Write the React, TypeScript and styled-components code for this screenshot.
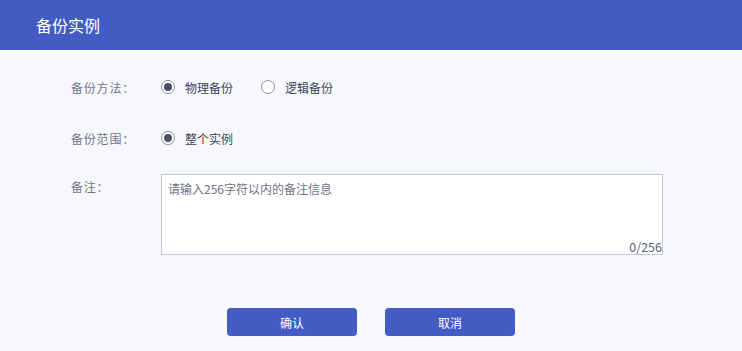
import { useState } from "react";
import styled, { createGlobalStyle } from "styled-components";

const GlobalStyle = createGlobalStyle`
  html, body {
    margin: 0;
    padding: 0;
    background: #f7f8fc;
    font-family: "Noto Sans CJK SC", "Noto Sans", sans-serif;
  }
`;

const Page = styled.div`
  width: 742px;
  height: 351px;
  background: #f7f8fc;
  overflow: hidden;
`;

const Header = styled.div`
  height: 50px;
  background: #435cc4;
  display: flex;
  align-items: center;
  padding-left: 36px;
  color: #ffffff;
  font-size: 16px;
`;

const Form = styled.div`
  display: flex;
  flex-direction: column;
  gap: 21px;
  padding: 22px 0 0 71px;
`;

const Row = styled.div<{ $top?: boolean }>`
  display: flex;
  align-items: ${(p) => (p.$top ? "flex-start" : "center")};
  min-height: 30px;
`;

const Label = styled.div<{ $top?: boolean }>`
  width: 90px;
  flex-shrink: 0;
  font-size: 12px;
  letter-spacing: 0.8px;
  color: #717788;
  padding-top: ${(p) => (p.$top ? "4px" : "0")};
`;

const RadioGroup = styled.div`
  display: flex;
  align-items: center;
  gap: 28px;
`;

const RadioItem = styled.label`
  display: flex;
  align-items: center;
  gap: 10px;
  font-size: 12px;
  color: #3e4456;
  cursor: pointer;
`;

const RadioCircle = styled.span<{ $checked: boolean }>`
  width: 12px;
  height: 12px;
  border-radius: 50%;
  border: 1px solid #8e93a3;
  background: #fff;
  display: flex;
  align-items: center;
  justify-content: center;
  &::after {
    content: "";
    width: 8px;
    height: 8px;
    border-radius: 50%;
    background: #4a5068;
    display: ${(p) => (p.$checked ? "block" : "none")};
  }
`;

const TextBox = styled.div`
  position: relative;
  width: 500px;
  height: 79px;
  border: 1px solid #c2c8db;
  background: #ffffff;
`;

const Area = styled.textarea`
  box-sizing: border-box;
  width: 100%;
  height: 100%;
  border: none;
  outline: none;
  resize: none;
  padding: 5px 6px;
  font-family: "Noto Sans CJK SC", "Noto Sans", sans-serif;
  font-size: 12px;
  color: #3e4456;
  background: transparent;
  &::placeholder {
    color: #6f7484;
  }
`;

const Counter = styled.span`
  position: absolute;
  right: 0;
  bottom: 0;
  font-size: 12.5px;
  line-height: 14px;
  color: #5a6072;
`;

const Actions = styled.div`
  display: flex;
  justify-content: center;
  gap: 28px;
  margin-top: 53px;
`;

const Button = styled.button`
  width: 130px;
  height: 28px;
  border: none;
  border-radius: 4px;
  background: #435cc4;
  color: #ffffff;
  font-family: "Noto Sans CJK SC", "Noto Sans", sans-serif;
  font-size: 12px;
  cursor: pointer;
`;

export default function App() {
  const [method, setMethod] = useState("physical");
  const [note, setNote] = useState("");

  return (
    <Page>
      <GlobalStyle />
      <Header>备份实例</Header>
      <Form>
        <Row>
          <Label>备份方法：</Label>
          <RadioGroup>
            <RadioItem onClick={() => setMethod("physical")}>
              <RadioCircle $checked={method === "physical"} />
              物理备份
            </RadioItem>
            <RadioItem onClick={() => setMethod("logical")}>
              <RadioCircle $checked={method === "logical"} />
              逻辑备份
            </RadioItem>
          </RadioGroup>
        </Row>
        <Row>
          <Label>备份范围：</Label>
          <RadioGroup>
            <RadioItem>
              <RadioCircle $checked />
              整个实例
            </RadioItem>
          </RadioGroup>
        </Row>
        <Row $top>
          <Label $top>备注：</Label>
          <TextBox>
            <Area
              placeholder="请输入256字符以内的备注信息"
              maxLength={256}
              value={note}
              onChange={(e) => setNote(e.target.value)}
            />
            <Counter>{note.length}/256</Counter>
          </TextBox>
        </Row>
      </Form>
      <Actions>
        <Button>确认</Button>
        <Button>取消</Button>
      </Actions>
    </Page>
  );
}
